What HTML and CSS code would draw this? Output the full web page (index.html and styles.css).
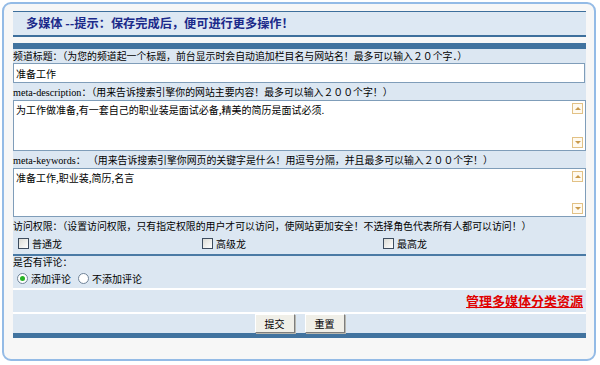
FILE: index.html
```html
<!DOCTYPE html>
<html lang="zh-CN">
<head>
    <meta charset="UTF-8">
    <title>多媒体</title>
    <link rel="stylesheet" href="styles.css">
</head>
<body>
    <div class="frame">
        <div class="panel">
            <div class="head">多媒体 --提示：保存完成后，便可进行更多操作！</div>
            <div class="gap"></div>

            <form class="form">
                <div class="bar"></div>

                <div class="label first">频道标题：（为您的频道起一个标题，前台显示时会自动追加栏目名与网站名！最多可以输入２０个字．）</div>
                <input class="text" type="text" value="准备工作">

                <div class="label"><span class="en">meta-description</span>：（用来告诉搜索引擎你的网站主要内容！最多可以输入２００个字！）</div>
                <div class="area area-desc">
                    <textarea>为工作做准备,有一套自己的职业装是面试必备,精美的简历是面试必须.</textarea>
                    <div class="scroll"><span class="arrow up"></span><span class="arrow down"></span></div>
                </div>

                <div class="label"><span class="en">meta-keywords</span>： （用来告诉搜索引擎你网页的关键字是什么！用逗号分隔，并且最多可以输入２００个字！）</div>
                <div class="area area-keys">
                    <textarea>准备工作,职业装,简历,名言</textarea>
                    <div class="scroll"><span class="arrow up"></span><span class="arrow down"></span></div>
                </div>

                <div class="label">访问权限：（设置访问权限，只有指定权限的用户才可以访问，使网站更加安全！不选择角色代表所有人都可以访问！）</div>
                <div class="roles">
                    <label class="check"><input type="checkbox">普通龙</label>
                    <label class="check"><input type="checkbox">高级龙</label>
                    <label class="check"><input type="checkbox">最高龙</label>
                </div>

                <div class="line-dark"></div>

                <div class="label comment-title">是否有评论：</div>
                <div class="radios">
                    <label class="radio"><input type="radio" name="comment" checked>添加评论</label>
                    <label class="radio"><input type="radio" name="comment">不添加评论</label>
                </div>

                <div class="line-white"></div>
                <div class="links"><a href="#">管理多媒体分类资源</a></div>
                <div class="line-white"></div>

                <div class="buttons">
                    <button type="submit" class="btn">提交</button>
                    <button type="reset" class="btn">重置</button>
                </div>

                <div class="bar bottom"></div>
            </form>
        </div>
    </div>
</body>
</html>
```

FILE: styles.css
```css
html, body {
    margin: 0;
    background: #ffffff;
}

body {
    width: 600px;
    height: 365px;
    overflow: hidden;
    font-family: "Noto Sans CJK SC", sans-serif;
    font-size: 9.9px;
    color: #000;
}

/* 外框 */
.frame {
    margin: 2px 0 0 2px;
    width: 594px;
    height: 359px;
    box-sizing: border-box;
    border: 2px solid #94bbe6;
    border-radius: 9px;
    background: #f7f7f7;
    padding: 7px 8px 0 9px;
}

.panel {
    width: 573px;
}

.head {
    border-top: 1px solid #3d6f9c;
    border-bottom: 2px solid #3d6f9c;
    background: #dde8f3;
    height: 23px;
    line-height: 23px;
    padding-left: 13px;
    font-size: 12.2px;
    font-weight: bold;
    color: #1b2a8a;
}

.gap {
    height: 6px;
}

.form {
    margin: 0;
    background: #dce7f2;
}

.bar {
    height: 6px;
    background: #41739f;
}

.bar.bottom {
    height: 5px;
}

.label {
    line-height: 14px;
    padding-top: 2px;
    white-space: nowrap;
}

.label.first {
    padding-top: 0;
}

.en {
    font-family: "Liberation Serif", serif;
    font-size: 10.2px;
}

.text {
    display: block;
    width: 572px;
    height: 20px;
    box-sizing: border-box;
    margin: 0;
    border: 1px solid #7f9db9;
    padding: 0 2px;
    font-family: inherit;
    font-size: 10px;
    background: #fff;
}

/* 文本框 + 滚动条 */
.area {
    position: relative;
    width: 573px;
}

.area textarea {
    display: block;
    width: 573px;
    box-sizing: border-box;
    margin: 0;
    border: 1px solid #7f9db9;
    padding: 2px;
    font-family: inherit;
    font-size: 10px;
    line-height: 13px;
    resize: none;
    overflow: hidden;
    background: #fff;
}

.area-desc textarea {
    height: 51px;
}

.area-keys textarea {
    height: 49px;
}

.scroll {
    position: absolute;
    top: 3px;
    right: 3px;
    bottom: 3px;
    display: flex;
    flex-direction: column;
    justify-content: space-between;
}

.arrow {
    width: 9px;
    height: 9px;
    border: 1px solid #e2c185;
    background: #fffaf0;
    display: flex;
    align-items: center;
    justify-content: center;
}

.arrow::after {
    content: "";
    border-left: 3px solid transparent;
    border-right: 3px solid transparent;
}

.arrow.up::after {
    border-bottom: 3px solid #c99a4c;
}

.arrow.down::after {
    border-top: 3px solid #c99a4c;
}

/* 权限 */
.roles {
    display: grid;
    grid-template-columns: 184px 181px 1fr;
    padding-left: 5px;
    height: 21px;
    align-items: center;
}

.check, .radio {
    display: flex;
    align-items: center;
    gap: 3px;
    font-size: 10px;
}

.check input {
    appearance: none;
    margin: 0;
    width: 11px;
    height: 11px;
    border: 1px solid #3d4c5e;
    background: linear-gradient(135deg, #dcdcd6, #ffffff);
    box-sizing: border-box;
}

.line-dark {
    height: 2px;
    background: #4a7aa5;
}

.comment-title {
    padding-top: 0;
    line-height: 13px;
}

.radios {
    display: flex;
    align-items: center;
    gap: 7px;
    padding-left: 4px;
    height: 19px;
}

.radio input {
    appearance: none;
    margin: 0;
    width: 11px;
    height: 11px;
    border: 1px solid #6f8398;
    border-radius: 50%;
    background: #fff;
    box-sizing: border-box;
    display: flex;
    align-items: center;
    justify-content: center;
}

.radio input:checked::after {
    content: "";
    width: 5px;
    height: 5px;
    border-radius: 50%;
    background: #27b327;
}

.line-white {
    height: 2px;
    background: #ffffff;
}

.links {
    height: 22px;
    line-height: 22px;
    text-align: right;
    padding-right: 3px;
}

.links a {
    color: #e00000;
    font-size: 13px;
    font-weight: bold;
}

.buttons {
    display: flex;
    justify-content: center;
    gap: 10px;
    height: 19px;
}

.btn {
    width: 40px;
    height: 19px;
    padding: 0;
    font-family: inherit;
    font-size: 10px;
    background: #f0efe8;
    border: 1px solid;
    border-color: #ffffff #7d7d7d #7d7d7d #ffffff;
    box-shadow: 1px 1px 0 #b8b8b0;
    color: #000;
}
```
